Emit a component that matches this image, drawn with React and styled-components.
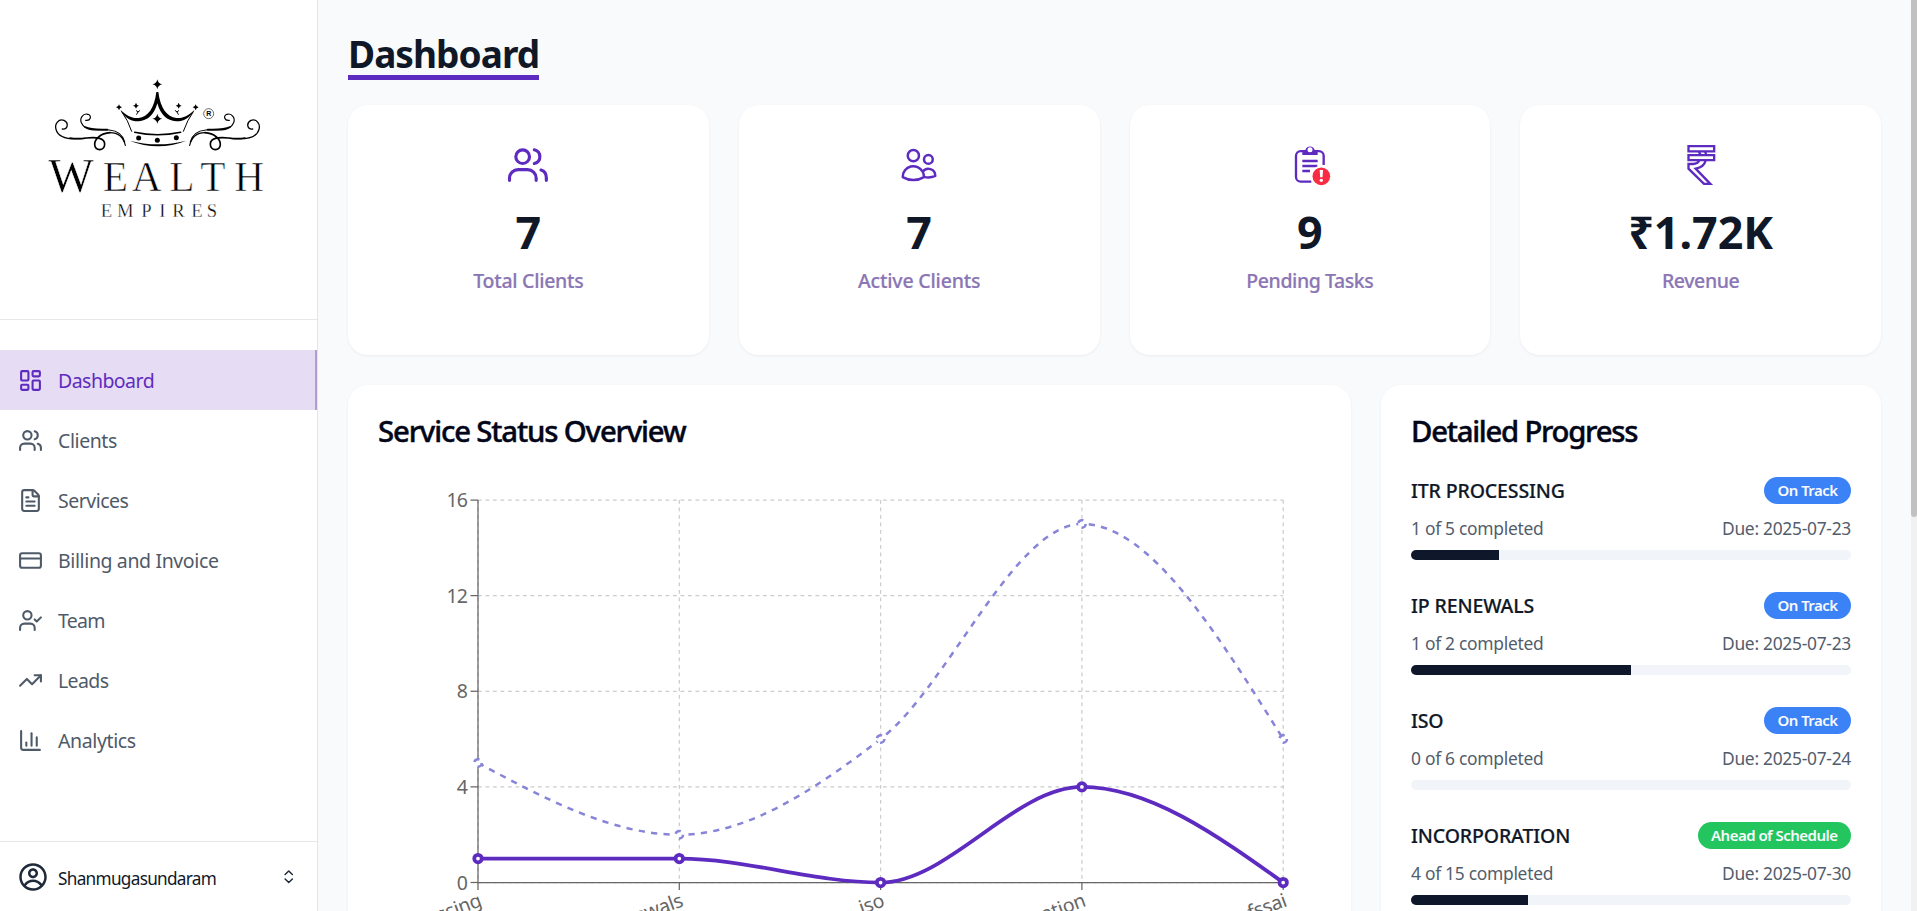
import React from 'react';
import styled, { createGlobalStyle } from 'styled-components';
import {
  LayoutDashboard, Users, FileText, CreditCard, UserCheck, TrendingUp, ChartColumn, ChevronsUpDown,
} from 'lucide-react';
import { HiOutlineUsers } from 'react-icons/hi2';
import { CgProfile } from 'react-icons/cg';

const PURPLE = '#5e2bc0';

const GlobalStyle = createGlobalStyle`
  * { box-sizing: border-box; }
  body {
    margin: 0;
    overflow: hidden;
    background: #f9fafc;
    font-family: "Noto Sans", "Open Sans", sans-serif;
    color: #101828;
  }
  h1, h2, p { margin: 0; }
`;

const Shell = styled.div`
  display: flex;
  height: 100vh;
  overflow: hidden;
`;

/* Sidebar */

const Sidebar = styled.aside`
  display: flex;
  flex-direction: column;
  flex: 0 0 318px;
  background: #fff;
  border-right: 1px solid #e2e4e9;
`;

const Brand = styled.div`
  height: 320px;
  padding: 70px 0 0 30px;
  border-bottom: 1px solid #e5e7eb;

  svg { display: block; }
`;

const Nav = styled.nav`
  flex: 1;
  padding-top: 30px;
`;

const NavItem = styled.a`
  display: flex;
  align-items: center;
  gap: 15px;
  height: 60px;
  padding-left: 18px;
  font-size: 19.5px;
  letter-spacing: ${(p) => p.$track}px;
  color: ${(p) => (p.$active ? PURPLE : '#4f5a69')};
  background: ${(p) => (p.$active ? '#e6dcf3' : 'transparent')};
  border-right: 2px solid ${(p) => (p.$active ? '#b39dd0' : 'transparent')};
`;

const Account = styled.div`
  display: flex;
  align-items: center;
  gap: 10px;
  height: 70px;
  padding: 0 19.5px 0 18px;
  border-top: 1px solid #e5e7eb;
  color: #1e2939;
`;

const AccountName = styled.span`
  flex: 1;
  font-size: 17.2px;
  letter-spacing: -0.7px;
  color: #101828;
  padding-top: 4px;
`;

/* Main column */

const Main = styled.main`
  flex: 1;
  min-width: 0;
  padding: 30px;
`;

const PageTitle = styled.h1`
  width: fit-content;
  height: 50px;
  margin-bottom: 25px;
  border-bottom: 5px solid ${PURPLE};
  font-size: 37px;
  line-height: 47px;
  font-weight: 700;
  letter-spacing: -0.95px;
`;

const StatGrid = styled.section`
  display: grid;
  grid-template-columns: repeat(4, 1fr);
  gap: 30px;
  margin-bottom: 30px;
`;

const Card = styled.div`
  background: #fff;
  border-radius: 20px;
  box-shadow: 0 1px 3px rgba(16, 24, 40, 0.06);
`;

const StatCard = styled(Card)`
  display: flex;
  flex-direction: column;
  align-items: center;
  height: 250px;
  padding-top: 40px;
  color: ${PURPLE};

  svg { overflow: visible; }
`;

const StatValue = styled.p`
  margin-top: 22px;
  font-size: 44.8px;
  line-height: 50px;
  font-weight: 700;
  color: #101828;
`;

const StatLabel = styled.p`
  margin-top: 9px;
  font-size: 19.5px;
  line-height: 30px;
  font-weight: 500;
  letter-spacing: ${(p) => p.$track}px;
  color: #8b76b5;
  -webkit-text-stroke: 0.2px currentColor;
`;

const PanelGrid = styled.section`
  display: grid;
  grid-template-columns: minmax(0, 1003fr) minmax(0, 500fr);
  gap: 30px;
`;

const Panel = styled(Card)`
  height: 640px;
  padding: 31px 30px 30px;
  overflow: hidden;
`;

const PanelTitle = styled.h2`
  margin-bottom: 29px;
  font-size: 29.3px;
  line-height: 30px;
  font-weight: 500;
  letter-spacing: ${(p) => p.$track}px;
  color: #020618;
  -webkit-text-stroke: 0.45px currentColor;
`;

const Chart = styled.svg`
  display: block;
  overflow: visible;
  font-family: "Noto Sans", "Open Sans", sans-serif;
  font-size: 19.5px;
`;

/* Progress list */

const ProgressItem = styled.div`
  margin-bottom: 30px;
`;

const ProgressHead = styled.div`
  display: flex;
  align-items: center;
  justify-content: space-between;
  height: 31px;
  margin-bottom: 9px;
`;

const ProgressName = styled.span`
  font-size: 19.5px;
  font-weight: 500;
  letter-spacing: -0.13px;
  -webkit-text-stroke: 0.2px currentColor;
`;

const Badge = styled.span`
  height: 27px;
  padding: 0 13.5px;
  border-radius: 14px;
  font-size: 15px;
  line-height: 27px;
  font-weight: 600;
  letter-spacing: ${(p) => p.$track}px;
  color: #f8fafc;
  background: ${(p) => (p.$ahead ? '#22c55e' : '#3b82f6')};
`;

const ProgressMeta = styled.div`
  display: flex;
  justify-content: space-between;
  margin-bottom: 8px;
  font-size: 17.4px;
  line-height: 27px;
  letter-spacing: -0.28px;
  color: #525d6c;
`;

const Track = styled.div`
  height: 10px;
  border-radius: 5px;
  overflow: hidden;
  background: #f1f4f9;
`;

const Fill = styled.div`
  height: 100%;
  background: #0f172a;
`;

const ScrollTrack = styled.div`
  flex: 0 0 6px;
  background: #f1f1f1;
`;

const ScrollThumb = styled.div`
  height: 517px;
  border-radius: 0 0 3px 3px;
  background: #c1c1c1;
`;

/* Drawings */

const star = (x, y, r) =>
  `M${x} ${y - r} Q${x + r * 0.15} ${y - r * 0.15} ${x + r} ${y} Q${x + r * 0.15} ${y + r * 0.15} ${x} ${y + r} Q${x - r * 0.15} ${y + r * 0.15} ${x - r} ${y} Q${x - r * 0.15} ${y - r * 0.15} ${x} ${y - r}Z`;

function Flourish() {
  return (
    <g fill="none" stroke="#000" strokeLinecap="round">
      <path strokeWidth="4" d="M97 177 C114 180 117 158 102 151 C86 145 73 162 78 178 C86 208 130 209 165 205" />
      <path strokeWidth="5" d="M120 204 C140 207 152 206 170 204 C200 201 224 204 224 222 C224 244 194 245 194 223 C194 207 212 190 240 188" />
      <path strokeWidth="3.5" d="M240 188 C266 188 280 202 286 226" />
      <path strokeWidth="3.5" d="M167 151 C182 153 186 138 174 133 C160 128 147 145 155 160 C168 188 208 178 238 180 C262 182 278 194 284 216" />
      <path strokeWidth="5" d="M165 171 C184 180 208 178 232 179" />
    </g>
  );
}

function Logo() {
  return (
    <svg width="250" height="160" viewBox="0 0 750 480" fill="#000" fontFamily='"Liberation Serif", serif'>
      <Flourish />
      <g transform="translate(765 0) scale(-1 1)"><Flourish /></g>
      <path d="M271 119 C290 138 308 145 326 144 C354 141 373 114 379 66 L385 66 C391 114 411 141 439 144 C457 145 475 138 494 119 C478 146 458 155 438 154 C412 152 392 136 382 100 C372 136 352 152 326 154 C306 155 286 146 271 119Z" />
      <g fill="none" stroke="#000" strokeLinecap="round">
        <path strokeWidth="3" d="M275 125 Q294 150 305 184 M490 125 Q472 150 460 184" />
        <path strokeWidth="4.5" d="M314 187 Q382 202 452 187" />
        <path strokeWidth="3" d="M319 122 L324 126 L329 122 M324 126 L320 133 M446 122 L441 126 L436 122 M441 126 L445 133" />
      </g>
      <path d="M299 212 Q382 234 469 212 Q384 246 299 212Z" />
      <circle cx="326" cy="204" r="7.5" />
      <circle cx="382" cy="211" r="7.5" />
      <circle cx="439" cy="203" r="7.5" />
      <path d={[star(382, 43, 15), star(382, 146, 15), star(267, 112, 9), star(318, 107, 9), star(446, 107, 9), star(497, 112, 9)].join(' ')} />
      <circle cx="536" cy="131" r="15" fill="none" stroke="#222" strokeWidth="2" />
      <text x="529" y="139" fontSize="21" fontWeight="700" fontFamily='"Liberation Sans", sans-serif'>R</text>
      <g stroke="#fff">
        <text x="55" y="365" fontSize="145" strokeWidth="1.5">W</text>
        <text x="218 305 418 511 613" y="364" fontSize="124" strokeWidth="2">EALTH</text>
        <text x="212 261 334 388 427 484 530" y="440" fontSize="56" strokeWidth="1">EMPIRES</text>
      </g>
    </svg>
  );
}

function TotalClientsIcon() {
  return (
    <svg width="40" height="40" viewBox="0 0 120 120" fill="none" stroke="currentColor" strokeWidth="9.5" strokeLinecap="round">
      <circle cx="44" cy="35" r="20.5" />
      <path d="M4.5 106 V100 a26 26 0 0 1 26 -26 h28 a26 26 0 0 1 26 26 v6" />
      <path d="M79 14.5 C89 17 95.5 25 95.5 35 S89 53 79 55.5" />
      <path d="M99 75 C109 78 115 87 115 98 V106" />
    </svg>
  );
}

function PendingIcon() {
  return (
    <svg width="40" height="40" viewBox="0 0 120 120">
      <g fill="none" stroke="currentColor" strokeWidth="7">
        <path d="M40 18.5 H32 a14 14 0 0 0 -14 14 V96 a14 14 0 0 0 14 14 H64" />
        <path d="M80 18.5 H87 a14 14 0 0 1 14 14 V60" />
        <path strokeWidth="7.5" d="M37 48 H83 M37 63 H82 M37 78 H60" />
      </g>
      <path fill="currentColor" d="M37 30 V15 H46 A14.500 14.500 0 0 1 74 15 H83 V30Z" />
      <circle cx="60" cy="14.500" r="7.500" fill="#fff" />
      <circle cx="94" cy="94" r="32" fill="#fff" />
      <circle cx="94" cy="94" r="26.500" fill="#fa2c43" />
      <path fill="#fff" d="M89 75 H99 L97.500 97 H90.500Z" />
      <circle cx="94" cy="106" r="5" fill="#fff" />
    </svg>
  );
}

function RevenueIcon() {
  return (
    <svg width="40" height="40" viewBox="0 0 120 120" fill="none" stroke="currentColor" strokeWidth="7">
      <path d="M22.500 3.500 H99.500 V19 H22.500Z M22.500 30.500 H99.500 V45.500 H22.500Z" />
      <path d="M53 20 Q57 24 58 30 M72 20 Q75 24 75 30" />
      <path d="M55 46 Q50 57 36 57 H22.500 V71 L69 116.500 H88 L44 71 Q70 66 74 46" />
    </svg>
  );
}

/* Chart geometry: monotone cubic interpolation through the data points */

const X0 = 100;
const STEP = 201.3;
const Y0 = 407.5;
const UNIT = 382.5 / 16;
const px = (i) => X0 + STEP * i;
const py = (v) => Y0 - UNIT * v;

function monotonePath(values) {
  const pts = values.map((v, i) => [px(i), py(v)]);
  const n = pts.length;
  const slope = pts.slice(1).map((p, i) => (p[1] - pts[i][1]) / STEP);
  const m = new Array(n);
  for (let i = 1; i < n - 1; i += 1) {
    const a = slope[i - 1];
    const b = slope[i];
    m[i] = (Math.sign(a) + Math.sign(b)) * Math.min(Math.abs(a), Math.abs(b), 0.5 * Math.abs((a + b) / 2)) || 0;
  }
  m[0] = (3 * slope[0] - m[1]) / 2;
  m[n - 1] = (3 * slope[n - 2] - m[n - 2]) / 2;
  let d = `M${pts[0][0]},${pts[0][1]}`;
  const k = STEP / 3;
  for (let i = 1; i < n; i += 1) {
    const [ax, ay] = pts[i - 1];
    const [bx, by] = pts[i];
    d += `C${ax + k},${ay + k * m[i - 1]},${bx - k},${by - k * m[i]},${bx},${by}`;
  }
  return d;
}

const services = ['itr processing', 'ip renewals', 'iso', 'incorporation', 'fssai'];
const completed = [1, 1, 0, 4, 0];
const totals = [5, 2, 6, 15, 6];
const ticks = [0, 4, 8, 12, 16];

function StatusChart() {
  return (
    <Chart width="943" height="500">
      <g stroke="#ccc" strokeWidth="1.25" strokeDasharray="3.75 3.75">
        {ticks.map((t) => <line key={t} x1={px(0)} x2={px(4)} y1={py(t)} y2={py(t)} />)}
        {services.map((s, i) => <line key={s} x1={px(i)} x2={px(i)} y1={py(16)} y2={py(0)} />)}
      </g>
      <g stroke="#666" strokeWidth="1.25">
        <line x1={px(0)} x2={px(4)} y1={Y0} y2={Y0} />
        <line x1={X0} x2={X0} y1={py(16)} y2={Y0} />
        {ticks.map((t) => <line key={t} x1={X0 - 7.5} x2={X0} y1={py(t)} y2={py(t)} />)}
        {services.map((s, i) => <line key={s} x1={px(i)} x2={px(i)} y1={Y0} y2={Y0 + 7.5} />)}
      </g>
      <g fill="#666" textAnchor="end">
        {ticks.map((t) => (
          <text key={t} x={X0 - 11} y={py(t) + 7} letterSpacing="-0.9">{t}</text>
        ))}
        {services.map((s, i) => (
          <text key={s} transform={`translate(${px(i)} ${Y0 + 10}) rotate(-20)`} y="14.2" letterSpacing="-0.3">{s}</text>
        ))}
      </g>
      <path d={monotonePath(completed)} fill="none" stroke={PURPLE} strokeWidth="3.75" />
      <g fill="#fff" stroke={PURPLE} strokeWidth="3.75">
        {completed.map((v, i) => <circle key={services[i]} cx={px(i)} cy={py(v)} r="3.75" />)}
      </g>
      <g stroke="#8884d8" strokeWidth="2.5" strokeDasharray="6.25 6.25">
        <path d={monotonePath(totals)} fill="none" />
        {totals.map((v, i) => <circle key={services[i]} cx={px(i)} cy={py(v)} r="3.75" fill="#fff" />)}
      </g>
    </Chart>
  );
}

const navItems = [
  { label: 'Dashboard', icon: LayoutDashboard, track: -0.54, active: true },
  { label: 'Clients', icon: Users, track: -0.42 },
  { label: 'Services', icon: FileText, track: -0.5 },
  { label: 'Billing and Invoice', icon: CreditCard, track: -0.38 },
  { label: 'Team', icon: UserCheck, track: -0.75 },
  { label: 'Leads', icon: TrendingUp, track: -0.6 },
  { label: 'Analytics', icon: ChartColumn, track: -0.38 },
];

const stats = [
  { label: 'Total Clients', value: '7', icon: <TotalClientsIcon />, track: -0.27 },
  { label: 'Active Clients', value: '7', icon: <HiOutlineUsers size={40} />, track: -0.18 },
  { label: 'Pending Tasks', value: '9', icon: <PendingIcon />, track: -0.42 },
  { label: 'Revenue', value: '₹1.72K', icon: <RevenueIcon />, track: -0.4 },
];

const progress = [
  { name: 'ITR PROCESSING', done: 1, total: 5, due: '2025-07-23' },
  { name: 'IP RENEWALS', done: 1, total: 2, due: '2025-07-23' },
  { name: 'ISO', done: 0, total: 6, due: '2025-07-24' },
  { name: 'INCORPORATION', done: 4, total: 15, due: '2025-07-30', ahead: true },
];

export default function App() {
  return (
    <Shell>
      <GlobalStyle />
      <Sidebar>
        <Brand><Logo /></Brand>
        <Nav>
          {navItems.map(({ label, icon: Icon, track, active }) => (
            <NavItem key={label} $track={track} $active={active}>
              <Icon size={25} />
              {label}
            </NavItem>
          ))}
        </Nav>
        <Account>
          <CgProfile size={30} />
          <AccountName>Shanmugasundaram</AccountName>
          <ChevronsUpDown size={17.5} />
        </Account>
      </Sidebar>
      <Main>
        <PageTitle>Dashboard</PageTitle>
        <StatGrid>
          {stats.map((s) => (
            <StatCard key={s.label}>
              {s.icon}
              <StatValue>{s.value}</StatValue>
              <StatLabel $track={s.track}>{s.label}</StatLabel>
            </StatCard>
          ))}
        </StatGrid>
        <PanelGrid>
          <Panel>
            <PanelTitle $track={-1.15}>Service Status Overview</PanelTitle>
            <StatusChart />
          </Panel>
          <Panel>
            <PanelTitle $track={-1.25}>Detailed Progress</PanelTitle>
            {progress.map((p) => (
              <ProgressItem key={p.name}>
                <ProgressHead>
                  <ProgressName>{p.name}</ProgressName>
                  <Badge $ahead={p.ahead} $track={p.ahead ? -0.52 : -0.55}>
                    {p.ahead ? 'Ahead of Schedule' : 'On Track'}
                  </Badge>
                </ProgressHead>
                <ProgressMeta>
                  <span>{p.done} of {p.total} completed</span>
                  <span>Due: {p.due}</span>
                </ProgressMeta>
                <Track>
                  <Fill style={{ width: `${(p.done / p.total) * 100}%` }} />
                </Track>
              </ProgressItem>
            ))}
          </Panel>
        </PanelGrid>
      </Main>
      <ScrollTrack><ScrollThumb /></ScrollTrack>
    </Shell>
  );
}
